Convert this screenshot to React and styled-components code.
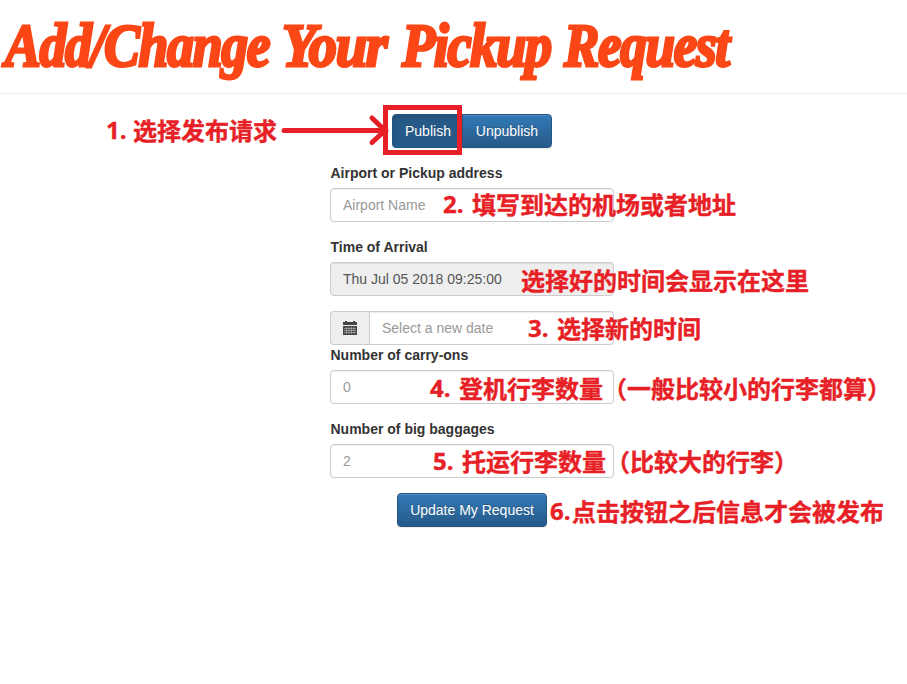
import React from "react";
import styled, { createGlobalStyle, css } from "styled-components";

const RED = "#e71f26";

const GlobalStyle = createGlobalStyle`
  *, *::before, *::after { box-sizing: border-box; }
  body {
    margin: 0;
    background: #fff;
    color: #333;
    font: 14px/20px "Liberation Sans", Arial, sans-serif;
  }
`;

const Page = styled.main`
  min-height: 684px;
  overflow: hidden;
`;

const Header = styled.header`
  height: 94px;
  border-bottom: 1px solid #eee;
`;

const Title = styled.h1`
  display: flex;
  margin: 0;
  padding-left: 5px;
  font: italic bold 62px/90px "Liberation Serif", "Times New Roman", serif;
  color: #fb4616;
  -webkit-text-stroke: 3px #fb4616;
  white-space: nowrap;
`;

const Word = styled.span`
  flex: none;
  width: ${(p) => p.$width}px;
  letter-spacing: -1.5px;
  transform: scaleX(${(p) => p.$stretch});
  transform-origin: left;
`;

const Form = styled.form`
  width: 284px;
  margin: 20px 0 0 330px;
`;

const Row = styled.div`
  position: relative;
  display: flex;
  justify-content: ${(p) => (p.$center ? "center" : "stretch")};
`;

const Field = styled.div`
  margin-top: 15px;
`;

const Label = styled.label`
  display: block;
  margin-bottom: 5px;
  padding-left: 0.5px;
  font-weight: bold;
`;

const inputFrame = css`
  height: 34px;
  border: 1px solid #ccc;
  border-radius: 4px;
`;

const Input = styled.input`
  ${inputFrame}
  flex: 1;
  min-width: 0;
  padding: 6px 12px;
  font: inherit;
  color: #555;
  background: #fff;
  box-shadow: inset 0 1px 1px rgba(0, 0, 0, 0.075);
  &::placeholder { color: #999; opacity: 1; }
  &:read-only { background: #eee; }
`;

const DateInput = styled(Input)`
  border-radius: 0 4px 4px 0;
`;

const Addon = styled.span`
  ${inputFrame}
  display: flex;
  align-items: center;
  justify-content: center;
  width: 39px;
  border-right: 0;
  border-radius: 4px 0 0 4px;
  background: #eee;
`;

const Button = styled.button`
  height: 34px;
  padding: 0 12px;
  border: 1px solid #245580;
  border-radius: 4px;
  font: inherit;
  color: #fff;
  white-space: nowrap;
  text-shadow: 0 -1px 0 rgba(0, 0, 0, 0.2);
  background: linear-gradient(#337ab7, #265a88);
  box-shadow: inset 0 1px 0 rgba(255, 255, 255, 0.15), 0 1px 1px rgba(0, 0, 0, 0.075);
`;

const PublishButton = styled(Button)`
  width: 71px;
  border-radius: 4px 0 0 4px;
  background: #265a88;
  box-shadow: inset 0 3px 5px rgba(0, 0, 0, 0.125);
`;

const UnpublishButton = styled(Button)`
  width: 90px;
  margin-left: -1px;
  border-radius: 0 4px 4px 0;
`;

const SubmitButton = styled(Button)`
  width: 150px;
`;

const ButtonGroup = styled.div`
  display: flex;
`;

const Note = styled.span`
  position: absolute;
  z-index: 1;
  left: ${(p) => p.$left}px;
  top: ${(p) => p.$top}px;
  display: flex;
  font: bold 24px/34px "Noto Sans CJK SC", sans-serif;
  color: ${RED};
  -webkit-text-stroke: 0.4px ${RED};
  white-space: nowrap;
  pointer-events: none;
`;

const NoteNumber = styled.span`
  width: ${(p) => p.$width}px;
  font-family: "Open Sans", "Noto Sans", sans-serif;
`;

const Highlight = styled.span`
  position: absolute;
  left: 53px;
  top: -9px;
  width: 79px;
  height: 50px;
  border: 5px solid ${RED};
`;

const Arrow = styled.svg`
  position: absolute;
  left: -50px;
  top: 0;
`;

function Annotation({ number, numberWidth, left, top, children }) {
  return (
    <Note $left={left} $top={top}>
      {number && <NoteNumber $width={numberWidth}>{number}</NoteNumber>}
      {children}
    </Note>
  );
}

function CalendarIcon() {
  return (
    <svg width="14" height="14" viewBox="0 0 14 14" fill="#444">
      <path d="M0 1h2v1h2V1h6v1h2V1h2v3H0z" />
      <path d="M2 0h2v2H2zM10 0h2v2h-2z" />
      <path d="M0 5h14v9H0z" />
      <path
        d="M1 7.5h12M1 9.5h12M1 11.5h12M3.5 6v7M6 6v7M8.5 6v7M11 6v7"
        stroke="#bbb"
        strokeWidth=".6"
      />
    </svg>
  );
}

export default function App() {
  return (
    <Page>
      <GlobalStyle />
      <Header>
        <Title>
          <Word $width={277} $stretch={0.865}>Add/Change</Word>
          <Word $width={120} $stretch={0.91}>Your</Word>
          <Word $width={162} $stretch={0.875}>Pickup</Word>
          <Word $width={170} $stretch={0.855}>Request</Word>
        </Title>
      </Header>
      <Form onSubmit={(e) => e.preventDefault()}>
        <Row $center>
          <ButtonGroup>
            <PublishButton type="button">Publish</PublishButton>
            <UnpublishButton type="button">Unpublish</UnpublishButton>
          </ButtonGroup>
          <Highlight />
          <Arrow width="110" height="34" fill="none" stroke={RED} strokeWidth="5" strokeLinecap="round">
            <path d="M4 16.5H106M92 4L105 16.5L92 28.5" />
          </Arrow>
          <Annotation number="1." numberWidth={27} left={-224} top={-1}>选择发布请求</Annotation>
        </Row>
        <Field>
          <Label htmlFor="airport">Airport or Pickup address</Label>
          <Row>
            <Input id="airport" placeholder="Airport Name" />
            <Annotation number="2." numberWidth={29} left={113} top={-1}>填写到达的机场或者地址</Annotation>
          </Row>
        </Field>
        <Field>
          <Label htmlFor="arrival">Time of Arrival</Label>
          <Row>
            <Input id="arrival" readOnly value="Thu Jul 05 2018 09:25:00" />
            <Annotation left={191} top={1}>选择好的时间会显示在这里</Annotation>
          </Row>
        </Field>
        <Field>
          <Row>
            <Addon><CalendarIcon /></Addon>
            <DateInput placeholder="Select a new date" />
            <Annotation number="3." numberWidth={29} left={198} top={0}>选择新的时间</Annotation>
          </Row>
          <Label htmlFor="carry">Number of carry-ons</Label>
          <Row>
            <Input id="carry" placeholder="0" />
            <Annotation number="4." numberWidth={29} left={100} top={1}>登机行李数量（一般比较小的行李都算）</Annotation>
          </Row>
        </Field>
        <Field>
          <Label htmlFor="bags">Number of big baggages</Label>
          <Row>
            <Input id="bags" placeholder="2" />
            <Annotation number="5." numberWidth={29} left={103} top={0}>托运行李数量（比较大的行李）</Annotation>
          </Row>
        </Field>
        <Field>
          <Row $center>
            <SubmitButton type="submit">Update My Request</SubmitButton>
            <Annotation number="6." numberWidth={22} left={220} top={1}>点击按钮之后信息才会被发布</Annotation>
          </Row>
        </Field>
      </Form>
    </Page>
  );
}
